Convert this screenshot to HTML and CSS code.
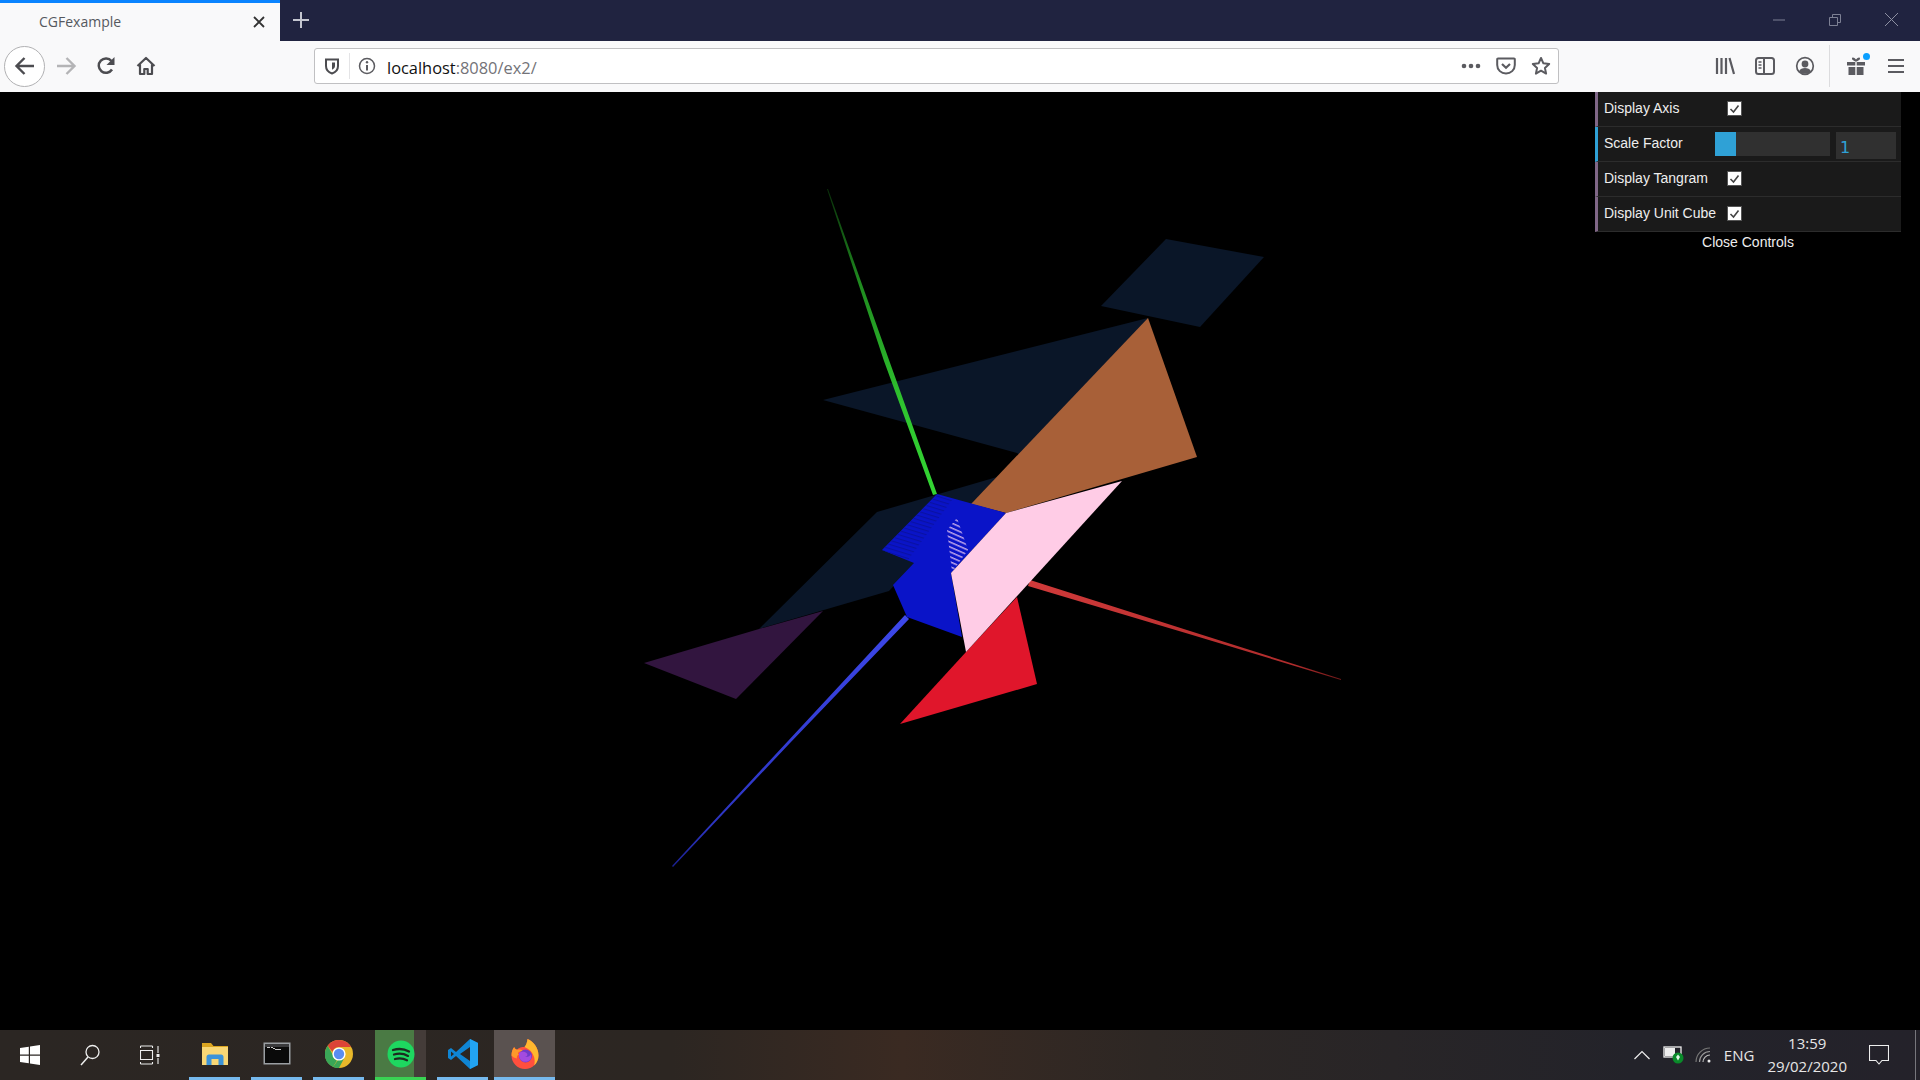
FILE: index.html
```html
<!DOCTYPE html>
<html lang="en">
<head>
  <meta charset="UTF-8">
  <title>CGFexample</title>
  <link rel="stylesheet" href="styles.css">
</head>
<body>
  <div class="tab-strip">
    <div class="tab">
      <span class="tab-title">CGFexample</span>
      <svg class="tab-close" width="14" height="14" viewBox="0 0 14 14"><path d="M2 2l10 10M12 2L2 12" stroke="#333" stroke-width="1.8"/></svg>
    </div>
    <svg class="new-tab" width="18" height="18" viewBox="0 0 18 18"><path d="M9 1v16M1 9h16" stroke="#c4c6d0" stroke-width="2"/></svg>
    <div class="window-controls">
      <svg width="14" height="14" viewBox="0 0 14 14"><path d="M1 7h12" stroke="#7d8094"/></svg>
      <svg width="14" height="14" viewBox="0 0 14 14"><path d="M1.5 4.5h8v8h-8zM4.5 4.5v-3h8v8h-3" fill="none" stroke="#7d8094"/></svg>
      <svg width="15" height="15" viewBox="0 0 15 15"><path d="M1 1l13 13M14 1L1 14" stroke="#8d90a2"/></svg>
    </div>
  </div>

  <div class="toolbar">
    <div class="nav-btn back">
      <svg width="22" height="20" viewBox="0 0 22 20"><path d="M20 10H3M10.5 2L2.5 10l8 8" fill="none" stroke="#4c4c50" stroke-width="2.4"/></svg>
    </div>
    <div class="nav-btn">
      <svg width="22" height="20" viewBox="0 0 22 20"><path d="M2 10h17M11.5 2l8 8-8 8" fill="none" stroke="#b4b4b6" stroke-width="2.4"/></svg>
    </div>
    <div class="nav-btn">
      <svg width="20" height="20" viewBox="0 0 20 20"><path d="M16 13.5A7.2 7.2 0 1 1 15.5 5" fill="none" stroke="#4c4c50" stroke-width="2.5"/><path d="M18.5 1v8h-8z" fill="#4c4c50"/></svg>
    </div>
    <div class="nav-btn">
      <svg width="20" height="20" viewBox="0 0 20 20"><path d="M1.5 10L10 2l8.5 8M4 8.5V18h4.3v-5h3.4v5H16V8.5" fill="none" stroke="#4c4c50" stroke-width="2.2" stroke-linejoin="round"/></svg>
    </div>

    <div class="urlbar">
      <svg class="url-shield" width="16" height="18" viewBox="0 0 16 18"><path d="M2 2.5h12V9c0 4-3 6.5-6 7.5-3-1-6-3.5-6-7.5z" fill="none" stroke="#4c4c50" stroke-width="2"/><path d="M8 5.5h3V9c0 1.8-1.5 3-3 3.700z" fill="#4c4c50"/></svg>
      <span class="url-sep"></span>
      <svg class="url-info" width="18" height="18" viewBox="0 0 18 18"><circle cx="9" cy="9" r="7.5" fill="none" stroke="#5b5b60" stroke-width="1.5"/><path d="M9 8v5.5" stroke="#5b5b60" stroke-width="2"/><circle cx="9" cy="5.3" r="1.2" fill="#5b5b60"/></svg>
      <span class="url-text">localhost<span class="url-dim">:8080/ex2/</span></span>
      <svg class="url-dots" width="20" height="6" viewBox="0 0 20 6"><circle cx="3" cy="3" r="2.3" fill="#5b5b60"/><circle cx="10" cy="3" r="2.3" fill="#5b5b60"/><circle cx="17" cy="3" r="2.3" fill="#5b5b60"/></svg>
      <svg class="url-pocket" width="20" height="18" viewBox="0 0 20 18"><path d="M2 1.5h16a.8.8 0 0 1 .8.8V8c0 5-4 8.5-8.800 8.5S1.200 13 1.200 8V2.300A.8.8 0 0 1 2 1.5z" fill="none" stroke="#5b5b60" stroke-width="2"/><path d="M6 7l4 3.800L14 7" fill="none" stroke="#5b5b60" stroke-width="2.2"/></svg>
      <svg class="url-star" width="20" height="20" viewBox="0 0 20 20"><path d="M10 2l2.400 5.300 5.800.7-4.300 3.900 1.200 5.700L10 14.700l-5.100 2.900 1.200-5.700L1.800 8l5.800-.7z" fill="none" stroke="#5b5b60" stroke-width="2" stroke-linejoin="round"/></svg>
    </div>

    <div class="tool-group">
      <div class="nav-btn">
        <svg width="20" height="18" viewBox="0 0 20 18"><path d="M2 1v16M6.5 1v16M11 1v16M14.5 1L19 17" stroke="#5b5b60" stroke-width="2.2" fill="none"/></svg>
      </div>
      <div class="nav-btn">
        <svg width="20" height="18" viewBox="0 0 20 18"><rect x="1" y="1" width="18" height="16" rx="2.5" fill="none" stroke="#5b5b60" stroke-width="2"/><path d="M9 1v16" stroke="#5b5b60" stroke-width="2"/><path d="M3.5 5h3M3.5 8h3M3.5 11h3" stroke="#5b5b60" stroke-width="1.3"/></svg>
      </div>
      <div class="nav-btn">
        <svg width="20" height="20" viewBox="0 0 20 20"><circle cx="10" cy="10" r="8.3" fill="none" stroke="#5b5b60" stroke-width="1.7"/><circle cx="10" cy="8" r="3.4" fill="#5b5b60"/><path d="M4 15.5c1-2.7 3.5-3.5 6-3.5s5 .8 6 3.5c-1.500 1.500-3.600 2.300-6 2.300s-4.500-.8-6-2.300z" fill="#5b5b60"/></svg>
      </div>
      <span class="tool-sep"></span>
      <div class="nav-btn gift">
        <svg width="20" height="20" viewBox="0 0 20 20"><path d="M7 1.5c1 0 2 .8 3 2 1-1.200 2-2 3-2 1.500 0 2 2.500-3 4.300-5-1.800-4.500-4.300-3-4.300z" fill="#5b5b60"/><path d="M1 6h8.300v3.500H1zM10.700 6H19v3.500h-8.300zM2.500 11h6.800v8H2.500zM10.700 11h6.800v8h-6.800z" fill="#5b5b60"/></svg>
        <span class="gift-dot"></span>
      </div>
      <div class="nav-btn">
        <svg width="18" height="16" viewBox="0 0 18 16"><path d="M1 2h16M1 8h16M1 14h16" stroke="#5b5b60" stroke-width="2.2"/></svg>
      </div>
    </div>
  </div>

  <div class="stage">
    <svg class="scene" width="1920" height="938" viewBox="0 92 1920 938">
      <defs>
        <linearGradient id="fade-g" gradientUnits="userSpaceOnUse" x1="828" y1="190" x2="936" y2="495"><stop offset="0" stop-color="#0a300a"/><stop offset=".3" stop-color="#1f8a1f"/><stop offset=".7" stop-color="#2fc42f"/><stop offset="1" stop-color="#33d633"/></linearGradient>
        <linearGradient id="fade-r" gradientUnits="userSpaceOnUse" x1="1030" y1="583" x2="1341" y2="680"><stop offset="0" stop-color="#d03a3a"/><stop offset=".85" stop-color="#b02c2c"/><stop offset="1" stop-color="#701818"/></linearGradient>
        <linearGradient id="fade-b" gradientUnits="userSpaceOnUse" x1="907" y1="617" x2="672" y2="866"><stop offset="0" stop-color="#3d48ea"/><stop offset=".85" stop-color="#2c34c0"/><stop offset="1" stop-color="#1a2090"/></linearGradient>
        <pattern id="hatch-dark" width="40" height="4" patternUnits="userSpaceOnUse" patternTransform="rotate(17)"><rect width="40" height="1.2" fill="#0a11a4"/></pattern>
        <pattern id="hatch-light" width="40" height="4.5" patternUnits="userSpaceOnUse" patternTransform="rotate(24)"><rect width="40" height="1.5" fill="#b9a0ea"/></pattern>
      </defs>
      <polygon points="1166,239 1264,257 1200,327 1101,306" fill="#0a1628"/>
      <polygon points="823,400 1148,318 1040,470 1017,453" fill="#0a1628"/>
      <polygon points="877,512 997,477 971,504 889,591 759,629" fill="#0a1628"/>
      <polygon points="644,663 759,629 823,611 736,699" fill="#32153f"/>
      <polygon points="827,189 828,189 889,360 937,494 933,495 884,361" fill="url(#fade-g)"/>
      <polygon points="1030,580 1190,631 1341,679 1341,680 1189,634 1028,586" fill="url(#fade-r)"/>
      <polygon points="905,615 909,619 790,743 673,867 672,866 788,741" fill="url(#fade-b)"/>
      <polygon points="1148,318 1197,457 1006,513 971,504" fill="#a86038"/>
      <polygon points="937,494 1006,513 951,573 962,637 907,617 893,585 914,563 882,550" fill="#0a14c8"/>
      <polygon points="937,495 952,500 908,560 882,550" fill="url(#hatch-dark)"/>
      <polygon points="957,518 968,550 952,572 947,530" fill="url(#hatch-light)"/>
      <polygon points="1017,597 1037,684 900,724 966,652" fill="#e0162b"/>
      <polygon points="1006,513 1122,481 966,652 951,573" fill="#ffcce6"/>
    </svg>

    <div class="gui">
      <ul class="gui-list">
        <li class="gui-row">
          <span class="gui-label">Display Axis</span>
          <span class="gui-check"><svg width="13" height="13" viewBox="0 0 13 13"><path d="M2.5 7l3 3 5-6.5" fill="none" stroke="#444" stroke-width="1.6"/></svg></span>
        </li>
        <li class="gui-row number">
          <span class="gui-label">Scale Factor</span>
          <span class="gui-slider"><span class="gui-slider-fill"></span></span>
          <span class="gui-value">1</span>
        </li>
        <li class="gui-row">
          <span class="gui-label">Display Tangram</span>
          <span class="gui-check"><svg width="13" height="13" viewBox="0 0 13 13"><path d="M2.5 7l3 3 5-6.5" fill="none" stroke="#444" stroke-width="1.6"/></svg></span>
        </li>
        <li class="gui-row">
          <span class="gui-label">Display Unit Cube</span>
          <span class="gui-check"><svg width="13" height="13" viewBox="0 0 13 13"><path d="M2.5 7l3 3 5-6.5" fill="none" stroke="#444" stroke-width="1.6"/></svg></span>
        </li>
      </ul>
      <div class="gui-close">Close Controls</div>
    </div>
  </div>

  <div class="taskbar">
    <div class="task-sys">
      <svg width="20" height="20" viewBox="0 0 20 20"><path d="M0 3l8.800-1.300v7.800H0zM10 1.500L20 0v9.500H10zM0 10.700h8.800v7.600L0 17zM10 10.700h10V20l-10-1.500z" fill="#fff"/></svg>
    </div>
    <div class="task-sys">
      <svg width="20" height="22" viewBox="0 0 20 22"><circle cx="12.5" cy="8" r="6.5" fill="none" stroke="#eee" stroke-width="1.3"/><path d="M8 13L1 21" stroke="#eee" stroke-width="1.5"/></svg>
    </div>
    <div class="task-sys">
      <svg width="20" height="20" viewBox="0 0 20 20"><path d="M.5 1h12M.5 5.500h12v9H.5zM.5 19h12M12.500 1v2M12.500 17v2M.5 1v2M.5 17v2" fill="none" stroke="#eee" stroke-width="1.1"/><path d="M18 1v7M18 13v6" stroke="#eee" stroke-width="1.1"/><rect x="16.5" y="9" width="3" height="3" fill="#eee"/></svg>
    </div>

    <div class="task-apps">
      <div class="task-item">
        <svg width="28" height="24" viewBox="0 0 28 24"><path d="M1 1h9l2.500 3H27v3H1z" fill="#dba520"/><path d="M1 5h26v18H1z" fill="#f8d775"/><path d="M5.500 23v-8c0-1.500 1-2.500 2.500-2.500h12c1.500 0 2.500 1 2.500 2.500v8h-5v-6h-7v6z" fill="#3b93d9"/></svg>
      </div>
      <div class="task-item">
        <svg width="28" height="23" viewBox="0 0 28 23"><rect x=".5" y=".5" width="27" height="22" fill="#9a9ea2"/><rect x="2" y="2" width="24" height="19" fill="#0a0a0a"/><rect x="2" y="2" width="24" height="3" fill="#3a3a3c"/><path d="M4 5.500h3M8 5.500h2M10 6.500h2M12 7.500h6" stroke="#c8c8c8" stroke-width="1"/></svg>
      </div>
      <div class="task-item">
        <svg width="28" height="28" viewBox="0 0 28 28"><circle cx="14" cy="14" r="14" fill="#e8b82a"/><path d="M14 0a14 14 0 0 1 12.100 7H14a7 7 0 0 0-6.600 4.700L2.700 5.700A14 14 0 0 1 14 0z" fill="#dc4437"/><path d="M2.700 5.700l5.500 9.800A7 7 0 0 0 12 20.600L8 27A14 14 0 0 1 2.700 5.700z" fill="#3aa757"/><path d="M8 27l5-7h1a7 7 0 0 0 6-3.500l-6 11.500a14 14 0 0 1-6-1z" fill="#3aa757"/><circle cx="14" cy="14" r="6.600" fill="#fff"/><circle cx="14" cy="14" r="5.200" fill="#5a8df0"/></svg>
      </div>
      <div class="task-item spotify">
        <svg width="28" height="28" viewBox="0 0 28 28"><circle cx="14" cy="14" r="13.5" fill="#1ed760"/><path d="M6 10c5.500-1.600 11.500-1 16 1.500M7 14.500c4.800-1.300 10-.8 14 1.400M8 19c4-1 8.500-.6 12 1.200" fill="none" stroke="#1c2b20" stroke-width="2.3" stroke-linecap="round"/></svg>
      </div>
      <div class="task-item">
        <svg width="30" height="30" viewBox="0 0 30 30"><path fill-rule="evenodd" d="M22 0L8 13 3 9 0 11v8l3 2 5-4 14 13 8-4V4zM22 8l-10 7 10 7zM3 12.500L6 15l-3 2.500z" fill="#0f85d4"/><path fill-rule="evenodd" d="M22 0l8 4v22l-8 4zM22 8v14l0-7z" fill="#22a3f2"/></svg>
      </div>
      <div class="task-item active">
        <svg width="28" height="30" viewBox="0 0 28 30"><path d="M14 30C6.500 30 .5 24 .5 16.500c0-3.400 1-6.300 2.700-8.500.5 1.400 1.400 2.300 2.800 2.800C8 8.300 10.700 8 13.500 8c1.500-1.800 2.800-4.800 3-8 5.800 2.400 11 8.500 11 16.500C27.500 24 21.500 30 14 30z" fill="#ff4f3e"/><path d="M16.500 0c6 2.500 11 8.500 11 16.500 0 4-1.700 7.500-4.300 10 .8-3.500.8-7.300-1-10.500C21 12.500 17.500 9.500 13.500 8c1.500-1.800 2.800-4.800 3-8z" fill="#ffb82e"/><path d="M.5 16.500c0-3.400 1-6.300 2.700-8.500.5 1.400 1.400 2.300 2.800 2.800 2.500-.5 4.500 0 6.500 1.200-2.500 0-4.800.5-5.500 2-.3.800 1 1.500 1 1.500-2 1-2.500 2.500-2 4-2.500-.3-4.200-1.500-5.500-3z" fill="#ff9a2a"/><circle cx="14.500" cy="17" r="6.500" fill="#6f3ac9"/><path d="M8 14c2-1.500 6-2 8 .5 1 1.500 0 3-2 3.500 3 .5 5-1 6-3 .5 2 .5 4-.5 5.500-2 2.500-6 3-8.500 1.500C8.500 20.500 7.500 17 8 14z" fill="#a34be0"/></svg>
      </div>
    </div>

    <div class="tray">
      <svg class="tray-caret" width="16" height="10" viewBox="0 0 16 10"><path d="M.5 9L8 1.500 15.500 9" fill="none" stroke="#eee" stroke-width="1.2"/></svg>
      <div class="tray-battery">
        <svg width="22" height="20" viewBox="0 0 22 20"><rect x="1" y="2" width="17" height="10" fill="none" stroke="#eee" stroke-width="1.3"/><rect x="2" y="3" width="10" height="8" fill="#eee"/><circle cx="15" cy="13" r="5.500" fill="#0a8a2a"/><path d="M15 9.500l2 2.500-2 3.500-2-3.500z" fill="#dff5e4"/></svg>
      </div>
      <svg class="tray-wifi" width="18" height="16" viewBox="0 0 18 16"><path d="M1 15A14 14 0 0 1 15 1" fill="none" stroke="#777" stroke-width="1.2"/><path d="M4.500 15A10.500 10.500 0 0 1 15 4.500" fill="none" stroke="#999" stroke-width="1.2"/><path d="M8 15a7 7 0 0 1 7-7" fill="none" stroke="#bbb" stroke-width="1.2"/><circle cx="14" cy="14" r="1.5" fill="#eee"/></svg>
      <span class="tray-lang">ENG</span>
      <div class="tray-clock">
        <span>13:59</span>
        <span>29/02/2020</span>
      </div>
      <svg class="tray-note" width="20" height="20" viewBox="0 0 20 20"><path d="M.5.500h19v15h-6.500L10 19l-3-3.500H.5z" fill="none" stroke="#eee" stroke-width="1.1"/></svg>
      <span class="tray-edge"></span>
    </div>
  </div>
</body>
</html>
```

FILE: styles.css
```css
html, body {
  margin: 0; padding: 0;
  width: 1920px; height: 1080px;
  overflow: hidden;
  background: #000;
}
body {
  display: flex;
  flex-direction: column;
  font-family: "Open Sans", "Noto Sans", sans-serif;
}

/* tab strip */
.tab-strip {
  height: 41px;
  display: flex;
  align-items: center;
  background: #202340;
}
.tab {
  width: 280px; height: 41px;
  box-sizing: border-box;
  display: flex;
  align-items: center;
  justify-content: space-between;
  padding: 0 14px 0 39px;
  background: #f9f9fa;
  border-top: 3px solid #0a84ff;
}
.tab-title {
  font-size: 14px;
  padding-bottom: 2px;
  color: #55585e;
}
.new-tab { margin: 0 0 1px 12px; }
.window-controls {
  margin: 0 0 2px auto;
  display: flex;
  align-items: center;
  gap: 42px;
  padding-right: 21px;
}

/* toolbar */
.toolbar {
  height: 51px;
  box-sizing: border-box;
  display: flex;
  align-items: center;
  padding: 0 0 1px 4px;
  background: #f9f9fa;
}
.nav-btn {
  width: 40px; height: 40px;
  display: flex;
  align-items: center;
  justify-content: center;
  flex: none;
}
.nav-btn.back {
  width: 41px; height: 41px;
  box-sizing: border-box;
  margin-right: 1px;
  background: #fff;
  border: 1px solid #b1b1b3;
  border-radius: 50%;
}
.urlbar {
  margin-left: 148px;
  width: 1245px; height: 36px;
  box-sizing: border-box;
  display: flex;
  align-items: center;
  background: #fff;
  border: 1px solid #c0c0c2;
  border-radius: 3px;
}
.url-shield { margin-left: 9px; }
.url-sep {
  width: 1px; height: 26px;
  margin-left: 9px;
  background: #e4e4e6;
}
.url-info { margin-left: 8px; }
.url-text {
  margin-left: 11px;
  padding-top: 2px;
  font-size: 16.4px;
  color: #111;
}
.url-dim { color: #737378; }
.url-dots { margin-left: auto; }
.url-pocket { margin-left: 15px; }
.url-star { margin-left: 15px; margin-right: 7px; }
.tool-group {
  display: flex;
  align-items: center;
  margin-left: 146px;
}
.tool-sep {
  width: 1px; height: 42px;
  margin: 0 6px 0 4px;
  background: #dcdcde;
}
.gift { position: relative; }
.gift-dot {
  position: absolute;
  top: 7px; right: 6px;
  width: 7px; height: 7px;
  border-radius: 50%;
  background: #0a9fff;
}

/* webgl area */
.stage {
  position: relative;
  height: 938px;
  background: #000;
}
.scene { display: block; }
.gui {
  position: absolute;
  top: 0; right: 19px;
  width: 306px;
  font-family: "Liberation Sans", Arial, sans-serif;
  font-size: 14px;
  color: #eee;
}
.gui-list {
  margin: 0; padding: 0;
  list-style: none;
}
.gui-row {
  height: 34px;
  display: flex;
  align-items: center;
  padding-left: 6px;
  background: #1a1a1a;
  border-left: 3px solid #806787;
  border-bottom: 1px solid #2c2c2c;
}
.gui-row.number { border-left-color: #2fa1d6; }
.gui-label {
  width: 123px;
  flex: none;
  padding-bottom: 2px;
  white-space: nowrap;
}
.gui-check {
  width: 13px; height: 13px;
  display: block;
  margin-bottom: 1px;
  background: #fff;
  border: 1px solid #555;
}
.gui-row.number .gui-label { width: 111px; }
.gui-slider {
  width: 115px; height: 24px;
  display: block;
  background: #303030;
}
.gui-slider-fill {
  width: 21px; height: 24px;
  display: block;
  background: #2fa1d6;
}
.gui-value {
  width: 60px; height: 27px;
  box-sizing: border-box;
  margin: 3px 0 0 6px;
  padding: 5px 0 0 4px;
  background: #303030;
  color: #2fa1d6;
  font-family: "DejaVu Sans", sans-serif;
  font-size: 16px;
  line-height: 22px;
}
.gui-close {
  height: 20px;
  line-height: 20px;
  text-align: center;
}

/* windows taskbar */
.taskbar {
  height: 50px;
  display: flex;
  align-items: center;
  background: linear-gradient(90deg, #2b2623 0%, #2c2622 35%, #3a2a22 47%, #2d2724 60%, #23232a 85%, #24222a 100%);
  color: #e6e6e6;
}
.task-sys {
  width: 60px;
  flex: none;
  display: flex;
  justify-content: center;
}
.task-apps {
  display: flex;
  margin-left: 3px;
}
.task-item {
  width: 51px; height: 50px;
  box-sizing: border-box;
  margin: 0 5px 0 6px;
  display: flex;
  align-items: center;
  justify-content: center;
  border-bottom: 3px solid #76b9ed;
}
.task-item.spotify {
  background: linear-gradient(90deg, #4a7a44 0 39px, #443c39 39px);
  border-bottom-color: #39d353;
}
.task-item.active {
  width: 61px;
  margin: 0 0 0 1px;
  background: #5a5250;
}
.tray {
  margin-left: auto;
  display: flex;
  align-items: center;
  height: 50px;
}
.tray-caret { margin-right: 13px; }
.tray-battery { margin-right: 10px; display: flex; }
.tray-wifi { margin-right: 11px; }
.tray-lang { font-size: 15px; margin-right: 13px; }
.tray-clock {
  display: flex;
  flex-direction: column;
  align-items: center;
  gap: 3px;
  padding-bottom: 2px;
  font-size: 15px;
  line-height: 20px;
  margin-right: 22px;
}
.tray-note { margin-right: 26px; }
.tray-edge {
  width: 1px; height: 50px;
  margin-right: 4px;
  background: #77767c;
}
```
